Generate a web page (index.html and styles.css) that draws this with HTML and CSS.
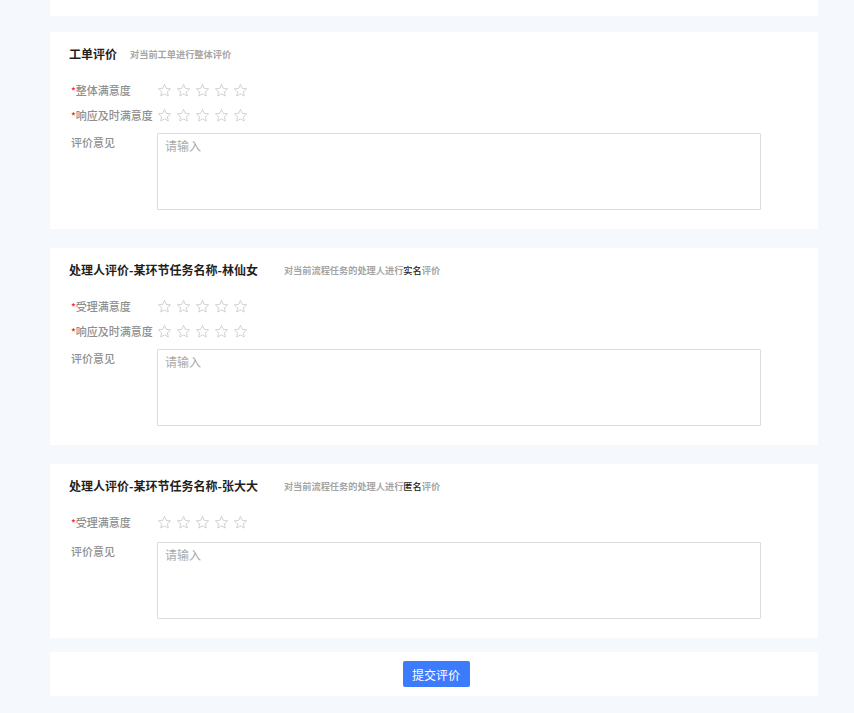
FILE: index.html
```html
<!DOCTYPE html>
<html lang="zh-CN">
<head>
<meta charset="utf-8">
<title>评价</title>
<link rel="stylesheet" href="styles.css">
</head>
<body>
<svg width="0" height="0" class="defs">
  <defs>
    <symbol id="star" viewBox="0 0 24 24">
      <polygon points="12,2.2 14.9,8.6 21.8,9.3 16.6,14 18.1,20.9 12,17.4 5.9,20.9 7.4,14 2.2,9.3 9.1,8.6" fill="none" stroke="#cfcfcf" stroke-width="1.5" stroke-linejoin="round"/>
    </symbol>
  </defs>
</svg>
<div class="page">
  <div class="card stub"></div>

  <section class="card eval">
    <div class="head">
      <h2 class="title">工单评价</h2>
      <span class="sub">对当前工单进行整体评价</span>
    </div>
    <div class="form">
      <div class="row">
        <label class="label"><i class="req">*</i>整体满意度</label>
        <div class="stars">
          <svg><use href="#star"/></svg><svg><use href="#star"/></svg><svg><use href="#star"/></svg><svg><use href="#star"/></svg><svg><use href="#star"/></svg>
        </div>
      </div>
      <div class="row">
        <label class="label"><i class="req">*</i>响应及时满意度</label>
        <div class="stars">
          <svg><use href="#star"/></svg><svg><use href="#star"/></svg><svg><use href="#star"/></svg><svg><use href="#star"/></svg><svg><use href="#star"/></svg>
        </div>
      </div>
      <div class="row area-row">
        <label class="label area-label">评价意见</label>
        <textarea class="area" placeholder="请输入"></textarea>
      </div>
    </div>
  </section>

  <section class="card eval">
    <div class="head">
      <h2 class="title">处理人评价-某环节任务名称-林仙女</h2>
      <span class="sub wide">对当前流程任务的处理人进行<b>实名</b>评价</span>
    </div>
    <div class="form">
      <div class="row">
        <label class="label"><i class="req">*</i>受理满意度</label>
        <div class="stars">
          <svg><use href="#star"/></svg><svg><use href="#star"/></svg><svg><use href="#star"/></svg><svg><use href="#star"/></svg><svg><use href="#star"/></svg>
        </div>
      </div>
      <div class="row">
        <label class="label"><i class="req">*</i>响应及时满意度</label>
        <div class="stars">
          <svg><use href="#star"/></svg><svg><use href="#star"/></svg><svg><use href="#star"/></svg><svg><use href="#star"/></svg><svg><use href="#star"/></svg>
        </div>
      </div>
      <div class="row area-row">
        <label class="label area-label">评价意见</label>
        <textarea class="area" placeholder="请输入"></textarea>
      </div>
    </div>
  </section>

  <section class="card eval">
    <div class="head">
      <h2 class="title">处理人评价-某环节任务名称-张大大</h2>
      <span class="sub wide">对当前流程任务的处理人进行<b>匿名</b>评价</span>
    </div>
    <div class="form">
      <div class="row">
        <label class="label"><i class="req">*</i>受理满意度</label>
        <div class="stars">
          <svg><use href="#star"/></svg><svg><use href="#star"/></svg><svg><use href="#star"/></svg><svg><use href="#star"/></svg><svg><use href="#star"/></svg>
        </div>
      </div>
      <div class="row area-row loose">
        <label class="label area-label">评价意见</label>
        <textarea class="area" placeholder="请输入"></textarea>
      </div>
    </div>
  </section>

  <div class="card submit">
    <button class="btn" type="button">提交评价</button>
  </div>
</div>
</body>
</html>
```

FILE: styles.css
```css
* {
  box-sizing: border-box;
}

html, body {
  margin: 0;
  padding: 0;
  background: #f5f9fd;
}

body {
  font-family: "Noto Sans CJK SC", "Noto Sans", sans-serif;
  color: #333;
}

.defs {
  position: absolute;
  width: 0;
  height: 0;
  overflow: hidden;
}

.page {
  display: flex;
  flex-direction: column;
  gap: 19px;
  padding: 0 36px 20px 50px;
}

.card {
  background: #fff;
}

.stub {
  height: 16px;
  margin-bottom: -3px;
}

.eval {
  padding: 14px 19px 19px 19px;
}

.head {
  display: flex;
  align-items: center;
  height: 16px;
}

.title {
  margin: 0;
  font-size: 12px;
  line-height: 16px;
  font-weight: 700;
  color: #1f1f1f;
}

.sub {
  margin-left: 13px;
  font-size: 9.2px;
  line-height: 16px;
  color: #a6a6a6;
  font-weight: 700;
}

.sub.wide {
  margin-left: 26px;
}

.sub b {
  color: #222;
  font-weight: 500;
}

.form {
  margin-top: 16px;
  padding-left: 2px;
}

.row {
  display: flex;
  align-items: center;
  height: 25px;
}

.label {
  width: 86px;
  flex: none;
  font-size: 11px;
  line-height: 16px;
  color: #8f8f8f;
  font-weight: 500;
  white-space: nowrap;
}

.req {
  font-style: normal;
  color: #f5222d;
  font-size: 10px;
}

.stars {
  display: flex;
  gap: 4px;
}

.stars svg {
  width: 15px;
  height: 15px;
  display: block;
}

.area-row {
  height: auto;
  align-items: flex-start;
  margin-top: 5px;
}

.area-row.loose {
  margin-top: 7px;
}

.area-label {
  padding-top: 1px;
}

.area {
  width: 604px;
  height: 77px;
  border: 1px solid #dcdcdc;
  border-radius: 1px;
  padding: 4px 7px;
  font-family: inherit;
  font-size: 12px;
  line-height: 16px;
  resize: none;
  outline: none;
  background: #fff;
}

.area::placeholder {
  color: #a9a9a9;
}

.submit {
  margin-top: -5px;
  height: 44px;
  display: flex;
  align-items: center;
  justify-content: center;
}

.btn {
  width: 67px;
  height: 26px;
  margin-left: 4px;
  border: none;
  border-radius: 2px;
  background: #3d7bfd;
  color: #fff;
  font-family: inherit;
  font-size: 12px;
  padding: 0;
}
```
